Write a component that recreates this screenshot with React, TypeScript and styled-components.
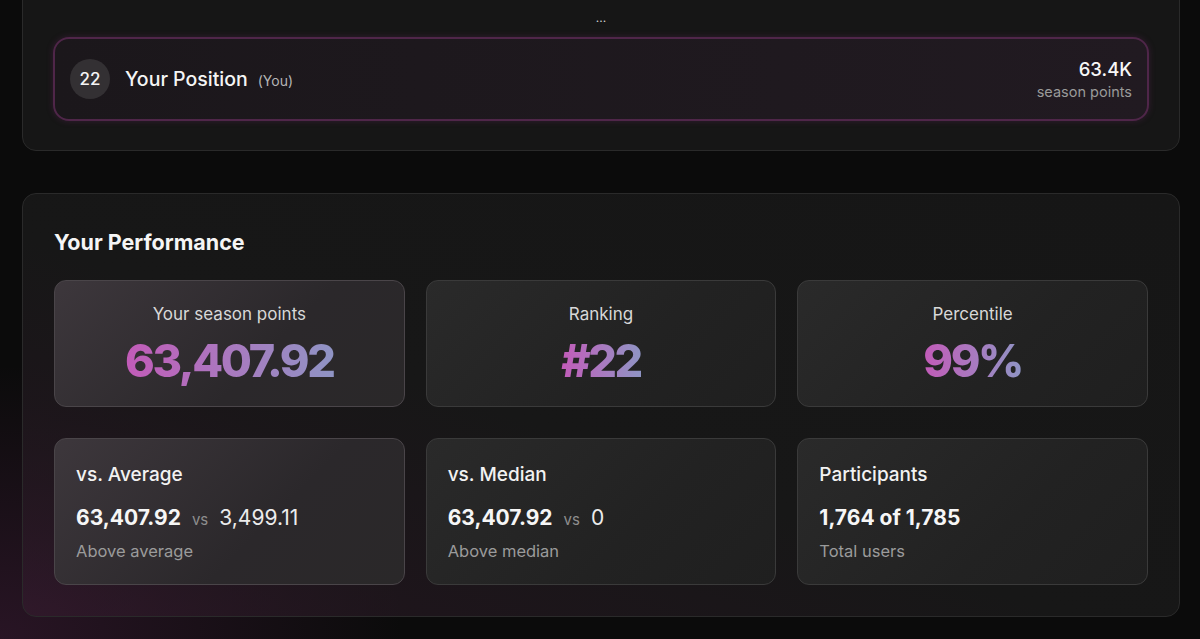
import styled, { createGlobalStyle } from 'styled-components';

const GlobalStyle = createGlobalStyle`
  html, body {
    margin: 0;
    padding: 0;
    background: #0b0b0b;
  }
  body {
    font-family: Inter, "Noto Sans", sans-serif;
    color: #f2f2f2;
    overflow: hidden;
  }
`;

const Page = styled.div`
  min-height: 639px;
  padding: 0 20px 0 22px;
  box-sizing: border-box;
  background:
    radial-gradient(ellipse 560px 380px at 0% 100%, rgba(70, 30, 62, 0.5), transparent 72%),
    #0b0b0b;
  display: flex;
  flex-direction: column;
  gap: 42px;
`;

const Card = styled.section`
  border: 1px solid #2a2a2a;
  border-radius: 14px;
  background: linear-gradient(20deg, rgba(60, 30, 52, 0.45) 0%, #171717 45%, #161616 100%);
  box-sizing: border-box;
`;

const LeaderCard = styled(Card)`
  margin-top: -25px;
  padding: 36px 30px 29px 30px;
  border-top-left-radius: 0;
  border-top-right-radius: 0;
  background: #161616;
`;

const Ellipsis = styled.div`
  text-align: center;
  font-size: 12px;
  line-height: 12px;
  color: #cfcfcf;
  margin-bottom: 13px;
`;

const PositionRow = styled.div`
  display: flex;
  align-items: center;
  justify-content: space-between;
  height: 84px;
  padding: 0 15px 0 15px;
  box-sizing: border-box;
  border: 2px solid #4f2649;
  border-radius: 16px;
  background: linear-gradient(90deg, #1b171b 0%, #211a21 100%);
  box-shadow: 0 0 6px rgba(110, 40, 100, 0.35);
`;

const Left = styled.div`
  display: flex;
  align-items: center;
  gap: 15px;
`;

const RankBadge = styled.div`
  width: 40px;
  height: 40px;
  border-radius: 50%;
  background: #333033;
  display: flex;
  align-items: center;
  justify-content: center;
  font-size: 17px;
  font-weight: 500;
  color: #f4f4f4;
`;

const Name = styled.span`
  font-size: 19.5px;
  font-weight: 500;
  color: #f5f5f5;
`;

const YouTag = styled.span`
  font-size: 14px;
  color: #b5b5b5;
  margin-left: 10px;
`;

const Right = styled.div`
  display: flex;
  flex-direction: column;
  align-items: flex-end;
  gap: 3px;
`;

const Points = styled.span`
  font-size: 18.5px;
  font-weight: 500;
  color: #f7f7f7;
`;

const PointsLabel = styled.span`
  font-size: 14.5px;
  color: #9a9a9a;
`;

const PerfCard = styled(Card)`
  padding: 34px 31px 31px 31px;
`;

const Title = styled.h2`
  margin: 0 0 24px 0;
  font-size: 21.5px;
  line-height: 28px;
  font-weight: 700;
  color: #f5f5f5;
`;

const Grid = styled.div`
  display: grid;
  grid-template-columns: repeat(3, 1fr);
  column-gap: 21px;
  row-gap: 31px;
`;

const Tile = styled.div<{ $highlight?: boolean }>`
  border: 1px solid ${(p) => (p.$highlight ? '#4a4549' : '#3a3a3a')};
  border-radius: 12px;
  box-sizing: border-box;
  background: ${(p) =>
    p.$highlight
      ? 'linear-gradient(135deg, #3d373c 0%, #2b282b 60%, #2a2829 100%)'
      : 'linear-gradient(135deg, #2a2a2a 0%, #222222 60%, #1f1f1f 100%)'};
`;

const StatTile = styled(Tile)`
  height: 127px;
  display: flex;
  flex-direction: column;
  align-items: center;
  padding-top: 22px;
`;

const StatLabel = styled.div`
  font-size: 17px;
  line-height: 22px;
  color: #d8d8d8;
`;

const StatValue = styled.div`
  margin-top: 10px;
  font-size: 45px;
  line-height: 52px;
  font-weight: 800;
  letter-spacing: -2.4px;
  background: linear-gradient(90deg, #c25bb8 0%, #a77cc0 55%, #8f94c4 100%);
  -webkit-background-clip: text;
  background-clip: text;
  color: transparent;
`;

const CompareTile = styled(Tile)`
  height: 147px;
  padding: 24px 21px 0 21px;
`;

const CompareTitle = styled.div`
  font-size: 19px;
  line-height: 24px;
  font-weight: 500;
  color: #f2f2f2;
`;

const CompareRow = styled.div`
  margin-top: 17px;
  height: 28px;
  display: flex;
  align-items: baseline;
  gap: 11px;
  line-height: 28px;
`;

const Mine = styled.span`
  font-size: 21px;
  font-weight: 700;
  color: #f6f6f6;
`;

const Vs = styled.span`
  font-size: 15px;
  color: #8e8e8e;
`;

const Theirs = styled.span`
  font-size: 21px;
  font-weight: 400;
  color: #ececec;
`;

const Caption = styled.div`
  margin-top: 8px;
  font-size: 16.5px;
  line-height: 22px;
  color: #9b9b9b;
`;

const stats = [
  { label: 'Your season points', value: '63,407.92', highlight: true },
  { label: 'Ranking', value: '#22' },
  { label: 'Percentile', value: '99%' },
];

const compares = [
  { title: 'vs. Average', mine: '63,407.92', theirs: '3,499.11', caption: 'Above average' },
  { title: 'vs. Median', mine: '63,407.92', theirs: '0', caption: 'Above median' },
  { title: 'Participants', mine: '1,764 of 1,785', caption: 'Total users' },
];

export default function App() {
  return (
    <>
      <GlobalStyle />
      <Page>
        <LeaderCard>
          <Ellipsis>...</Ellipsis>
          <PositionRow>
            <Left>
              <RankBadge>22</RankBadge>
              <div>
                <Name>Your Position</Name>
                <YouTag>(You)</YouTag>
              </div>
            </Left>
            <Right>
              <Points>63.4K</Points>
              <PointsLabel>season points</PointsLabel>
            </Right>
          </PositionRow>
        </LeaderCard>

        <PerfCard>
          <Title>Your Performance</Title>
          <Grid>
            {stats.map((s) => (
              <StatTile key={s.label} $highlight={s.highlight}>
                <StatLabel>{s.label}</StatLabel>
                <StatValue>{s.value}</StatValue>
              </StatTile>
            ))}
            {compares.map((c, i) => (
              <CompareTile key={c.title} $highlight={i === 0}>
                <CompareTitle>{c.title}</CompareTitle>
                <CompareRow>
                  <Mine>{c.mine}</Mine>
                  {c.theirs && (
                    <>
                      <Vs>vs</Vs>
                      <Theirs>{c.theirs}</Theirs>
                    </>
                  )}
                </CompareRow>
                <Caption>{c.caption}</Caption>
              </CompareTile>
            ))}
          </Grid>
        </PerfCard>
      </Page>
    </>
  );
}
